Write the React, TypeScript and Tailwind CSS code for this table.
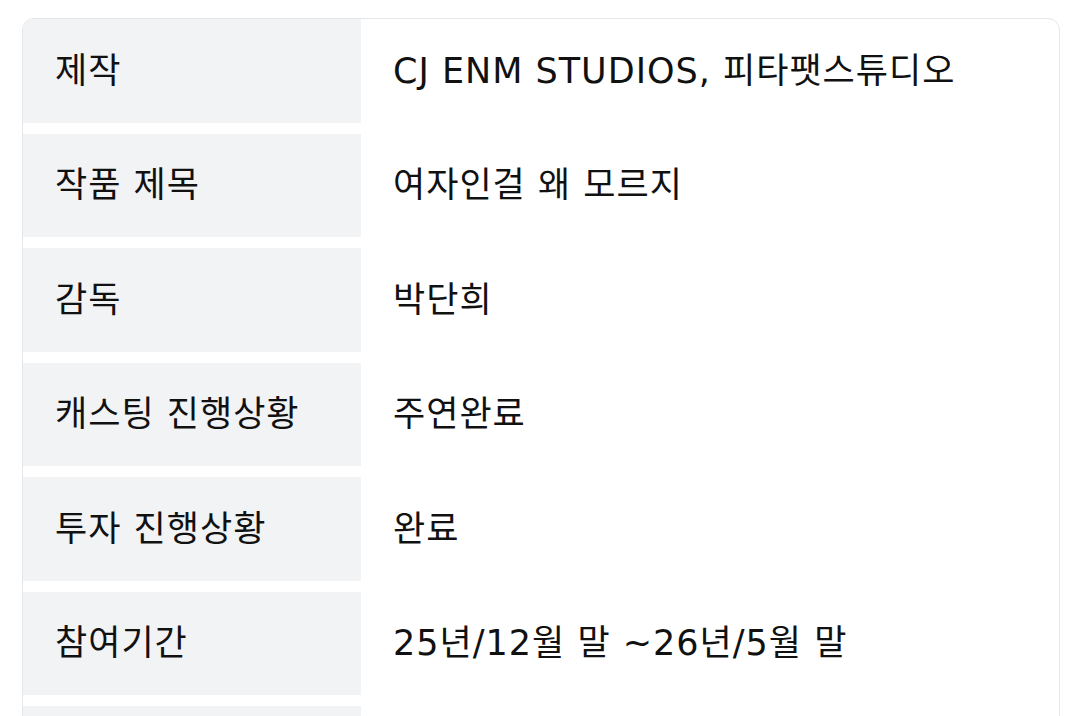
const rows: [string, string][] = [
  ["제작", "CJ ENM STUDIOS, 피타팻스튜디오"],
  ["작품 제목", "여자인걸 왜 모르지"],
  ["감독", "박단희"],
  ["캐스팅 진행상황", "주연완료"],
  ["투자 진행상황", "완료"],
  ["참여기간", "25년/12월 말 ~26년/5월 말"],
  ["", ""],
];

export default function App() {
  return (
    <div
      className="w-[1080px] h-[716px] overflow-hidden bg-white pt-[18px] pl-[22px] text-[#111111]"
      style={{ fontFamily: '"DejaVu Sans", "Noto Sans CJK KR", sans-serif' }}
    >
      <div className="w-[1038px] rounded-t-xl border border-[#e4e6e9] overflow-hidden">
        <div className="flex flex-col gap-[11px]">
          {rows.map(([label, value], i) => (
            <div key={i} className="grid grid-cols-[338px_1fr] h-[103.5px]">
              <div className="bg-[#f2f3f5] flex items-center pl-8 text-[35px] tracking-[1px] whitespace-nowrap">{label}</div>
              <div className="flex items-center pl-8 text-[35px] tracking-[1px] whitespace-nowrap">{value}</div>
            </div>
          ))}
        </div>
      </div>
    </div>
  );
}
